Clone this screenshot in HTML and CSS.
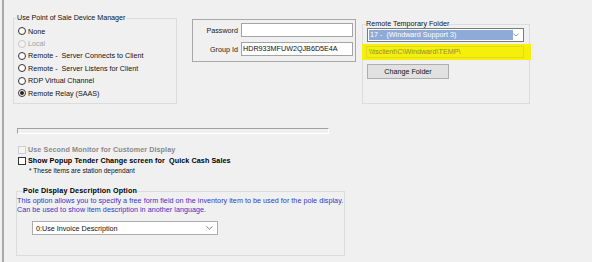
FILE: index.html
```html
<!DOCTYPE html>
<html lang="en">
<head>
  <meta charset="UTF-8">
  <title>Point of Sale Device Settings</title>
  <link rel="stylesheet" href="styles.css">
</head>
<body>
  <div class="panel">
    <div class="top">
      <fieldset class="group device">
        <legend>Use Point of Sale Device Manager</legend>
        <div class="radio"><span class="dot"></span>None</div>
        <div class="radio disabled"><span class="dot"></span>Local</div>
        <div class="radio"><span class="dot"></span>Remote -&nbsp; Server Connects to Client</div>
        <div class="radio"><span class="dot"></span>Remote -&nbsp; Server Listens for Client</div>
        <div class="radio"><span class="dot"></span>RDP Virtual Channel</div>
        <div class="radio checked"><span class="dot"></span>Remote Relay (SAAS)</div>
      </fieldset>

      <fieldset class="group login">
        <div class="field">
          <span class="field-label">Password</span>
          <span class="textbox"></span>
        </div>
        <div class="field">
          <span class="field-label">Group Id</span>
          <span class="textbox">HDR933MFUW2QJB6D5E4A</span>
        </div>
      </fieldset>

      <fieldset class="group folder">
        <legend>Remote Temporary Folder</legend>
        <div class="combo">
          <span class="combo-selected">17 -&nbsp; (Windward Support 3)</span>
          <svg class="chevron" width="7" height="4" viewBox="0 0 7 4"><path d="M0.5 0.5 L3.5 3.2 L6.5 0.5" fill="none" stroke="#707070" stroke-width="0.9"/></svg>
        </div>
        <div class="highlight">
          <div class="path-box">\\tsclient\C\Windward\TEMP\</div>
        </div>
        <div class="btn">Change Folder</div>
      </fieldset>
    </div>

    <div class="groove"></div>

    <div class="check disabled"><span class="box"></span>Use Second Monitor for Customer Display</div>
    <div class="check strong"><span class="box"></span>Show Popup Tender Change screen for&nbsp; Quick Cash Sales</div>
    <div class="note">* These items are station dependant</div>

    <fieldset class="group pole">
      <legend>Pole Display Description Option</legend>
      <p class="hint">This option allows you to specify a free form field on the inventory item to be used for the pole display.<br>Can be used to show item description in another language.</p>
      <div class="combo wide">
        <span class="combo-text">0:Use Invoice Description</span>
        <svg class="chevron" width="7" height="4" viewBox="0 0 7 4"><path d="M0.5 0.5 L3.5 3.2 L6.5 0.5" fill="none" stroke="#707070" stroke-width="0.9"/></svg>
      </div>
    </fieldset>
  </div>
</body>
</html>
```

FILE: styles.css
```css
body {
  margin: 0;
  background: #f0f0f0;
  font-family: "Liberation Sans", Arial, sans-serif;
  font-size: 7.2px;
  color: #111;
}
.panel {
  margin-left: 2px;
  border-left: 2px solid #a9a9a9;
  min-height: 262px;
  box-sizing: border-box;
}
.top {
  display: flex;
  align-items: flex-start;
}
.group {
  margin: 0;
  padding: 0;
  border: 1px solid #dcdcdc;
  box-sizing: border-box;
  min-width: 0;
}
.group legend {
  padding: 0 1px;
  line-height: 8px;
}
.device {
  margin: 14px 0 0 9px;
  width: 164px;
  height: 90px;
  padding-top: 3px;
}
.device legend {
  margin-left: 2px;
  letter-spacing: -0.05px;
}
.radio {
  display: flex;
  align-items: center;
  height: 12.4px;
  margin-left: 4px;
  white-space: nowrap;
}
.dot {
  width: 8px;
  height: 8px;
  border: 1px solid #333;
  border-radius: 50%;
  background: #fff;
  box-sizing: border-box;
  margin-right: 2px;
  display: flex;
  align-items: center;
  justify-content: center;
}
.radio.disabled {
  color: #a0a0a0;
}
.radio.disabled .dot {
  border-color: #c8c8c8;
  background: #f4f4f4;
}
.radio.checked .dot::after {
  content: "";
  width: 4px;
  height: 4px;
  border-radius: 50%;
  background: #222;
}
.login {
  margin: 19px 0 0 15px;
  width: 164px;
  height: 43px;
  border-color: #a8a8a8;
  padding-top: 3px;
}
.field {
  display: flex;
  align-items: center;
  margin-bottom: 5px;
}
.field-label {
  width: 45px;
  text-align: right;
  margin-right: 3px;
  color: #222;
}
.textbox {
  width: 112px;
  height: 14px;
  box-sizing: border-box;
  border: 1px solid #a4a4a4;
  background: #fff;
  padding-left: 1px;
  line-height: 12px;
}
.folder {
  margin: 20px 0 0 6px;
  width: 168px;
  height: 84px;
}
.folder legend {
  margin-left: 3px;
  padding: 0;
}
.combo {
  display: flex;
  align-items: center;
  justify-content: space-between;
  margin-left: 4px;
  width: 157px;
  height: 14px;
  box-sizing: border-box;
  border: 1px solid #7a7a7a;
  background: #fff;
  padding: 1px 4px 1px 1px;
}
.combo-selected {
  flex: 0 0 144px;
  height: 10px;
  line-height: 10px;
  background: #8dabd6;
  color: #fff;
  padding-left: 1px;
  box-sizing: border-box;
}
.chevron {
  display: block;
}
.highlight {
  margin: 2px 0 0 -1px;
  width: 169px;
  height: 16px;
  background: #f6ef0a;
  padding: 2px 0 0 4px;
  box-sizing: border-box;
}
.path-box {
  width: 158px;
  height: 12px;
  box-sizing: border-box;
  border: 1px solid #e2d925;
  color: #8e8c40;
  padding-left: 2px;
  line-height: 10px;
}
.btn {
  margin: 4px 0 0 4px;
  width: 82px;
  height: 15px;
  box-sizing: border-box;
  border: 1px solid #adadad;
  background: #e1e1e1;
  text-align: center;
  line-height: 13px;
  color: #111;
}
.groove {
  margin: 24px 0 0 13px;
  width: 312px;
  height: 6px;
  box-sizing: border-box;
  border-top: 1px solid #a0a0a0;
  border-left: 1px solid #a0a0a0;
  border-bottom: 1px solid #fff;
  border-right: 1px solid #fff;
}
.check {
  display: flex;
  align-items: center;
  height: 11px;
  margin-left: 14px;
  white-space: nowrap;
  font-weight: bold;
  letter-spacing: 0.08px;
}
.check.disabled {
  margin-top: 10px;
  color: #8a8a8a;
}
.check.strong {
  color: #000;
}
.box {
  width: 8px;
  height: 8px;
  box-sizing: border-box;
  border: 1px solid #333;
  background: #fff;
  margin-right: 2px;
}
.check.disabled .box {
  border-color: #cfcfcf;
  background: #f4f4f4;
}
.note {
  margin-left: 25px;
  height: 10px;
  line-height: 10px;
  font-size: 6.6px;
}
.pole {
  margin: 11px 0 0 12px;
  width: 329px;
  height: 69px;
}
.pole legend {
  margin-left: 6px;
  padding: 0;
  font-weight: bold;
  color: #000;
  letter-spacing: 0.15px;
}
.hint {
  margin: 2px 0 0;
  line-height: 8.5px;
  color: #3434c4;
  white-space: nowrap;
  letter-spacing: 0.03px;
}
.combo.wide {
  margin: 7px 0 0 15px;
  width: 186px;
  border-color: #acacac;
  padding: 0 4px 0 3px;
}
```
